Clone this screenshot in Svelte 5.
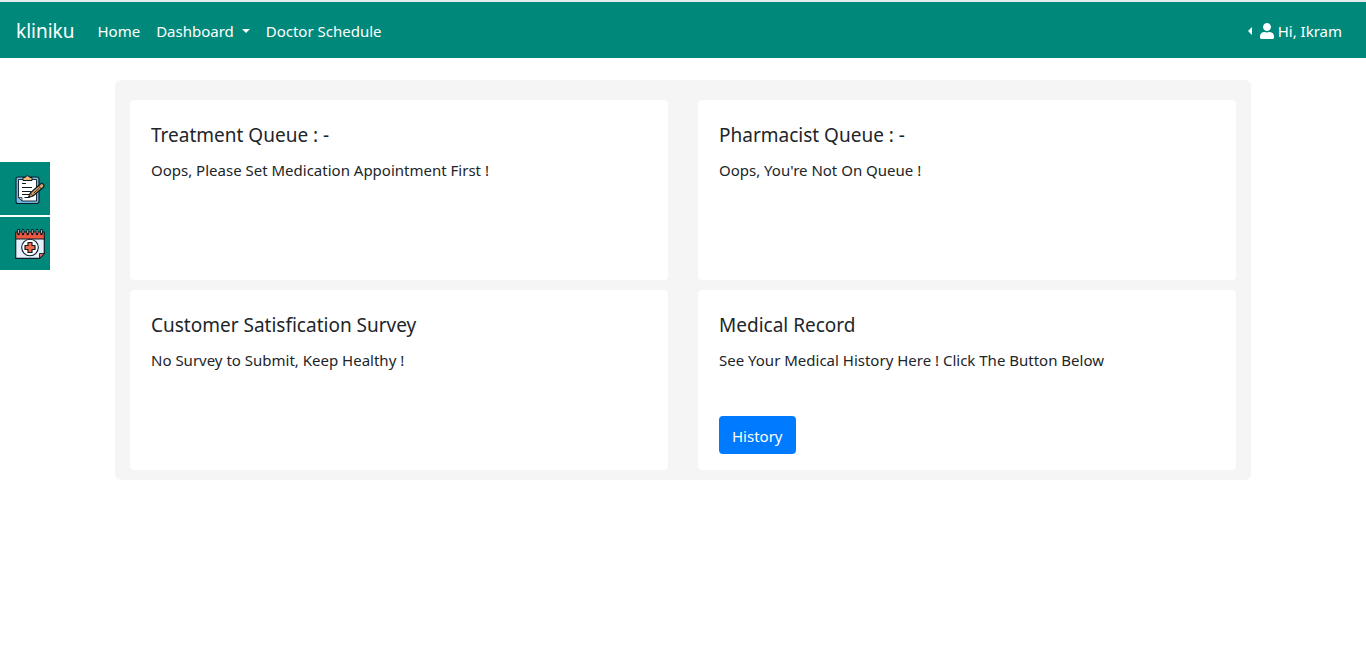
<script>
  const cards = [
    { title: 'Treatment Queue : -', text: 'Oops, Please Set Medication Appointment First !' },
    { title: 'Pharmacist Queue : -', text: "Oops, You're Not On Queue !" },
    { title: 'Customer Satisfication Survey', text: 'No Survey to Submit, Keep Healthy !' },
    { title: 'Medical Record', text: 'See Your Medical History Here ! Click The Button Below', action: 'History' }
  ];
</script>

<header class="navbar">
  <a class="brand" href="#home">kliniku</a>
  <nav class="links" aria-label="Main">
    <a href="#home">Home</a>
    <button type="button" aria-haspopup="true">Dashboard <span class="caret down"></span></button>
    <a href="#schedule">Doctor Schedule</a>
  </nav>
  <button class="user" type="button" aria-haspopup="true">
    <span class="caret left"></span>
    <svg width="14" height="16" viewBox="0 0 448 512" aria-hidden="true">
      <path fill="currentColor" d="M224 256c70.700 0 128-57.300 128-128S294.700 0 224 0 96 57.300 96 128s57.300 128 128 128zm89.600 32h-16.700c-22.200 10.200-46.900 16-72.900 16s-50.600-5.800-72.900-16h-16.700C60.200 288 0 348.200 0 422.400V464c0 26.500 21.500 48 48 48h352c26.500 0 48-21.500 48-48v-41.600c0-74.200-60.200-134.400-134.400-134.400z" />
    </svg>
    <span>Hi, Ikram</span>
  </button>
</header>

<aside class="shortcuts">
  <a href="#appointment" aria-label="Appointment">
    <svg width="30" height="30" viewBox="0 0 30 30" aria-hidden="true">
      <rect x="1" y="3" width="23" height="26.500" rx="2" fill="#6fb9e4" stroke="#0b1c26" stroke-width="1.100" />
      <path d="M3.500 5.500h18v21.500H7l-3.500-3.500z" fill="#fff" stroke="#0b1c26" stroke-width=".9" />
      <path d="M3.500 23.500H7V27z" fill="#b8cde0" stroke="#0b1c26" stroke-width=".7" />
      <path d="M8 6.500V3.500h2.200a2.400 2.400 0 0 1 4.600 0H17v3z" fill="#f4b878" stroke="#0b1c26" stroke-width="1" />
      <path d="M7 9.500h4M7 13.500h10M7 17.500h9M7 20.500h7M9.500 23.500h5" fill="none" stroke="#0b1c26" stroke-width="1.200" />
      <path d="M13.500 23.500l1.800-4.500L25.500 10q1.600-1.200 2.900.3t0 2.900L18 22z" fill="#e4a262" stroke="#0b1c26" stroke-width="1.200" stroke-linejoin="round" />
      <path d="M23.500 11.800l2.900 3.200M15.300 19l2.700 3M18.500 19.300l6-5.300" fill="none" stroke="#0b1c26" stroke-width=".8" />
    </svg>
  </a>
  <a href="#calendar" aria-label="Medical calendar">
    <svg width="30" height="30" viewBox="0 0 30 30" aria-hidden="true">
      <path d="M.7 9h28.600v15.500l-4.800 4.800H.7z" fill="#e5effc" stroke="#0b1c26" stroke-width="1.200" />
      <path d="M.7 3h28.600v7H.7z" fill="#ec5840" stroke="#0b1c26" stroke-width="1.100" />
      <path d="M24.500 29.300v-4.800h4.800z" fill="#ec7060" stroke="#0b1c26" stroke-width=".9" />
      <path d="M3.500 1v4M8 1v4M12.700 1v4M17.300 1v4M22 1v4M26.500 1v4" stroke="#0b1c26" stroke-width="2.400" stroke-linecap="round" />
      <path d="M3.500 1v3M8 1v3M12.700 1v3M17.300 1v3M22 1v3M26.500 1v3" stroke="#f8d8d0" stroke-width=".8" />
      <circle cx="15" cy="18.500" r="8.300" fill="#fff" stroke="#0b1c26" stroke-width="1.100" />
      <path d="M13 13.500h4v3h3v4h-3v3h-4v-3h-3v-4h3z" fill="#f06a48" stroke="#0b1c26" stroke-width="1.200" stroke-linejoin="round" />
    </svg>
  </a>
</aside>

<main class="panel">
  {#each cards as card}
    <section class="card">
      <h5>{card.title}</h5>
      <p>{card.text}</p>
      {#if card.action}
        <a class="btn" href="#history">{card.action}</a>
      {/if}
    </section>
  {/each}
</main>

<style>
  :global(body) {
    margin: 0;
    background: #fff;
    color: #212529;
    font: 15px/24px "Segoe UI", "Noto Sans", sans-serif;
  }

  .navbar {
    display: flex;
    align-items: center;
    box-sizing: border-box;
    min-height: 58px;
    padding: 9px 16px 7px;
    border-top: 2px solid #e6eeed;
    background: #00897b;
    color: #fff;
  }

  .navbar a,
  .navbar button {
    color: inherit;
    text-decoration: none;
  }

  .navbar button {
    border: 0;
    background: none;
    font: inherit;
    cursor: pointer;
  }

  .navbar .brand {
    margin-right: 15px;
    font-size: 19px;
    line-height: 30px;
  }

  .links {
    display: flex;
    flex: 1;
  }

  .links a,
  .links button {
    padding: 8px;
  }

  .caret {
    display: inline-block;
    border: 4px solid transparent;
  }

  .down {
    margin-left: 4px;
    border-top-color: currentColor;
    border-bottom: 0;
    vertical-align: 4px;
  }

  .left {
    margin-right: 4px;
    border-right-color: currentColor;
    border-left: 0;
  }

  .user {
    display: flex;
    align-items: center;
    gap: 4px;
    padding: 8px;
  }

  .shortcuts {
    position: fixed;
    top: 162px;
    left: 0;
    display: grid;
    gap: 2px;
  }

  .shortcuts a {
    display: block;
    padding: 12px 5px 11px 15px;
    background: #00897b;
  }

  .shortcuts svg {
    display: block;
  }

  .panel {
    display: grid;
    grid-template-columns: 1fr 1fr;
    gap: 10px 30px;
    box-sizing: border-box;
    max-width: 1136px;
    margin: 22px auto 0;
    padding: 20px 15px 10px;
    border-radius: 6px;
    background: #f5f5f5;
  }

  .card {
    display: flex;
    flex-direction: column;
    align-items: flex-start;
    box-sizing: border-box;
    min-height: 180px;
    padding: 23px 21px 16px;
    border-radius: 4px;
    background: #fff;
  }

  h5 {
    margin: 0 0 11px;
    font-size: 19px;
    font-weight: 400;
    line-height: 24px;
  }

  p {
    margin: 0;
  }

  .btn {
    margin-top: auto;
    padding: 8px 13px 6px;
    border-radius: 4px;
    background: #007bff;
    color: #fff;
    text-decoration: none;
  }
</style>
